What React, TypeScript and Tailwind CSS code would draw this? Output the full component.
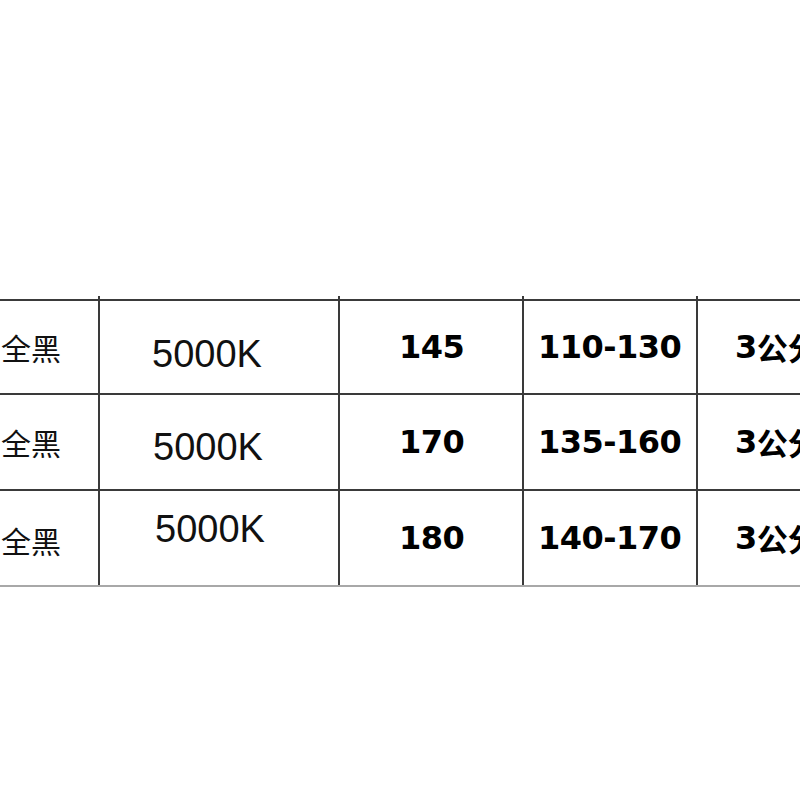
const rows = [
  { kelvin: "5000K", kPad: "pl-[52px]", kShift: "translate-y-[7px]", watt: "145", range: "110-130" },
  { kelvin: "5000K", kPad: "pl-[53px]", kShift: "translate-y-[5px]", watt: "170", range: "135-160" },
  { kelvin: "5000K", kPad: "pl-[55px]", kShift: "-translate-y-[9px]", watt: "180", range: "140-170" },
];

const cols = "grid grid-cols-[100px_240px_184px_174px_1fr]";
const cjk = "font-['Noto_Sans_CJK_SC',sans-serif]";
const bold = "font-['DejaVu_Sans','Noto_Sans_CJK_SC',sans-serif] font-bold text-[32px] tracking-[-0.5px] text-black";

export default function App() {
  return (
    <main className="min-h-[800px] w-[800px] bg-white pt-[296px] overflow-hidden">
      {/* little stubs of the column lines poking over the top rule */}
      <div className={`${cols} h-[3px]`}>
        <div className="border-r-2 border-[#3a3a3a]" />
        <div className="border-r-2 border-[#3a3a3a]" />
        <div className="border-r-2 border-[#3a3a3a]" />
        <div className="border-r-2 border-[#3a3a3a]" />
        <div />
      </div>

      <div className="border-t-2 border-[#3a3a3a]">
        {rows.map((r, i) => (
          <div
            key={i}
            className={`${cols} ${i === 0 ? "h-[94px]" : "h-[96px]"} border-b-2 ${
              i === rows.length - 1 ? "border-[#a8a8a8]" : "border-[#3a3a3a]"
            }`}
          >
            <div className="flex items-center border-r-2 border-[#3a3a3a] pl-[1px]">
              <span className={`${cjk} text-[30px] text-[#111] ${i === 2 ? "translate-y-[2px]" : ""}`}>全黑</span>
            </div>
            <div className={`flex items-center border-r-2 border-[#3a3a3a] ${r.kPad}`}>
              <span className={`font-['Liberation_Sans',sans-serif] text-[38px] text-[#111] ${r.kShift}`}>
                {r.kelvin}
              </span>
            </div>
            <div className="flex items-center border-r-2 border-[#3a3a3a] pl-[59px]">
              <span className={bold}>{r.watt}</span>
            </div>
            <div className="flex items-center border-r-2 border-[#3a3a3a] pl-[14px]">
              <span className={bold}>{r.range}</span>
            </div>
            <div className="flex items-center pl-[37px] whitespace-nowrap">
              <span className={bold}>3</span>
              <span className={`${cjk} font-bold text-[31px] text-black`}>公分</span>
            </div>
          </div>
        ))}
      </div>
    </main>
  );
}
